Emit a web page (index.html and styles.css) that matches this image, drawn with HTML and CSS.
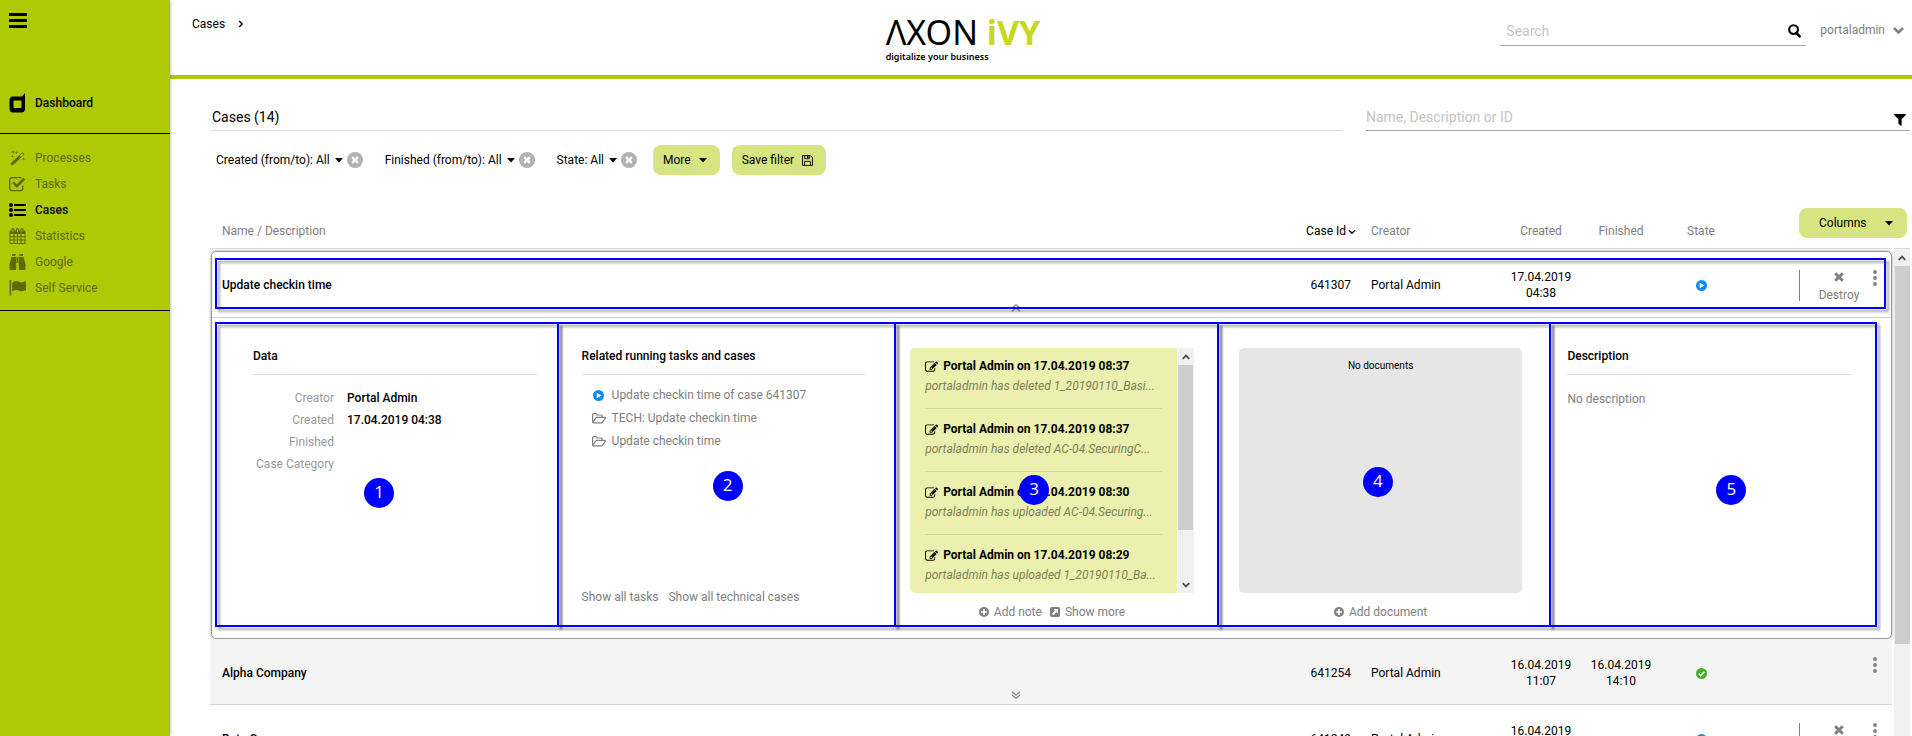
FILE: index.html
```html
<!DOCTYPE html>
<html lang="en">
<head>
<meta charset="utf-8">
<title>Cases - Portal</title>
<link rel="stylesheet" href="styles.css">
</head>
<body>
<svg class="sprite" aria-hidden="true">
  <symbol id="i-bars" viewBox="0 0 18 15"><path d="M0 0h18v3H0zM0 6h18v3H0zM0 12h18v3H0z"/></symbol>
  <symbol id="i-dash" viewBox="0 0 16 20"><path fill-rule="evenodd" d="M3.500 3.500H12.500L15.500 0V15.500Q15.500 19.500 12 19.500H3.500Q0 19.500 0 15.500V7.500Q0 3.500 3.500 3.500ZM4 7.500V15H12V7.500Z"/></symbol>
  <symbol id="i-magic" viewBox="0 0 16 16"><path fill-rule="evenodd" d="M1 13.600 13 2.200 15 4.300 3 15.700ZM10.300 5.700 11.600 7 14 4.400 12.800 3.300Z"/><path d="M3.500 0 4 1.500 5.500 2 4 2.500 3.500 4 3 2.500 1.500 2 3 1.500ZM7 1.200 7.500 2.200 8.500 2.700 7.500 3.200 7 4.200 6.500 3.200 5.500 2.700 6.500 2.200ZM14 7.500 14.400 8.500 15.500 9 14.400 9.500 14 10.500 13.600 9.500 12.500 9 13.600 8.500ZM3 5 3.400 6 4.500 6.500 3.400 7 3 8 2.600 7 1.500 6.500 2.600 6Z"/></symbol>
  <symbol id="i-check" viewBox="0 0 16 14"><path d="M13 8.500V11a2.200 2.200 0 0 1-2.200 2.200H3A2.200 2.200 0 0 1 .7 11V3.200A2.200 2.200 0 0 1 3 1h8.500" fill="none" stroke="currentColor" stroke-width="1.300"/><path d="M3 6.300 4.600 4.700 7.300 7.300 13.400 1.200 15.200 3 7.300 10.800Z"/></symbol>
  <symbol id="i-list" viewBox="0 0 17 14"><circle cx="2" cy="2" r="2"/><circle cx="2" cy="7" r="2"/><circle cx="2" cy="12" r="2"/><path d="M5 1h12v2H5zM5 6h12v2H5zM5 11h12v2H5z"/></symbol>
  <symbol id="i-cal" viewBox="0 0 16 16"><path fill-rule="evenodd" d="M0 3.500Q0 2.500 1 2.500H2V1.500Q2 0 3.500 0T5 1.500V2.500H6.500V1.500Q6.500 0 8 0T9.500 1.500V2.500H11V1.500Q11 0 12.500 0T14 1.500V2.500H15Q16 2.500 16 3.500V15Q16 16 15 16H1Q0 16 0 15ZM1 6V8.300H4V6ZM5 6V8.300H7.600V6ZM8.500 6V8.300H11V6ZM12 6V8.300H15V6ZM1 9.200V11.600H4V9.200ZM5 9.200V11.600H7.600V9.200ZM8.500 9.200V11.600H11V9.200ZM12 9.200V11.600H15V9.200ZM1 12.500V15H4V12.500ZM5 12.500V15H7.600V12.500ZM8.500 12.500V15H11V12.500ZM12 12.500V15H15V12.500ZM3 1.500V4H4V1.500ZM7.500 1.500V4H8.500V1.500ZM12 1.500V4H13V1.500Z"/></symbol>
  <symbol id="i-bino" viewBox="0 0 16 16"><path d="M2.500 0H6V2H2.500ZM10 0H13.500V2H10ZM2 3H6.700V15Q6.700 16 5.700 16H1Q0 16 0 15V10ZM14 3H9.300V15Q9.300 16 10.300 16H15Q16 16 16 15V10ZM7.200 3H8.800V9H7.200Z"/></symbol>
  <symbol id="i-flag" viewBox="0 0 16 14"><path d="M.6 1a.9.900 0 1 1 1.400 0V14H.6ZM3 2Q6-.5 9.500 1.200 12 2.500 16 .5V8.800Q12.500 11 9.500 9.500 6.500 8 3 10.300Z"/></symbol>
  <symbol id="i-search" viewBox="0 0 14 15"><circle cx="6" cy="6" r="4.700" fill="none" stroke="currentColor" stroke-width="2.300"/><path d="M9 9.500 12.500 13.300" stroke="currentColor" stroke-width="2.800" stroke-linecap="round"/></symbol>
  <symbol id="i-chev" viewBox="0 0 11 8"><path d="M1 1.500 5.500 6 10 1.500" fill="none" stroke="currentColor" stroke-width="2.600"/></symbol>
  <symbol id="i-thin" viewBox="0 0 8 6"><path d="M1 1.200 4 4.200 7 1.200" fill="none" stroke="currentColor" stroke-width="1.400"/></symbol>
  <symbol id="i-caret" viewBox="0 0 8 5"><path d="M0 0H8L4 4.500Z"/></symbol>
  <symbol id="i-filter" viewBox="190 256 1412 1408"><path d="M1595 295q17 41-14 70l-493 493v742q0 42-39 59-13 5-25 5-27 0-45-19l-256-256q-19-19-19-45V858L211 365q-31-29-14-70 17-39 59-39h1280q42 0 59 39z"/></symbol>
  <symbol id="i-timesc" viewBox="0 0 16 16"><circle cx="8" cy="8" r="8"/><path d="M5.200 5.200 10.800 10.800M10.800 5.200 5.200 10.800" stroke="#fff" stroke-width="2.600"/></symbol>
  <symbol id="i-save" viewBox="0 0 12 12"><path d="M.6.6H9L11.400 3V11.400H.6ZM2.800 11.400V7H9.200V11.400M3 .6V4H8V.6" fill="none" stroke="currentColor" stroke-width="1"/><path d="M5.500 1H7V3.500H5.500Z"/></symbol>
  <symbol id="i-play" viewBox="0 0 12 12"><circle cx="6" cy="6" r="6"/><path d="M4 3 9.200 6 4 9Z" fill="#fff"/></symbol>
  <symbol id="i-done" viewBox="0 0 12 12"><circle cx="6" cy="6" r="6"/><path d="M3 6 5.200 8.200 9 4.200" fill="none" stroke="#fff" stroke-width="1.800"/></symbol>
  <symbol id="i-times" viewBox="0 0 10 10"><path d="M1.200 1.200 8.800 8.800M8.800 1.200 1.200 8.800" stroke="currentColor" stroke-width="3"/></symbol>
  <symbol id="i-dots" viewBox="0 0 4 16"><circle cx="2" cy="2" r="1.900"/><circle cx="2" cy="8" r="1.900"/><circle cx="2" cy="14" r="1.900"/></symbol>
  <symbol id="i-folder" viewBox="0 0 14 11"><path d="M.6 9.800V1.600Q.6.600 1.500.6H4Q4.900.6 5 2H9.300Q10.200 2 10.200 3V4.200M.6 9.900 3.600 5Q4 4.300 4.800 4.300H12.800Q13.700 4.400 13.200 5.200L10.800 8.900Q10.200 9.900 9.200 9.900H1" fill="none" stroke="currentColor" stroke-width="1.200"/></symbol>
  <symbol id="i-edit" viewBox="0 120 1784 1420"><path d="M888 1184l116-116-152-152-116 116v56h96v96h56zm440-720q-16-16-33 1L945 815q-17 17-1 33t33-1l350-350q17-17 1-33zm80 594v190q0 119-84.500 203.500T1120 1536H288q-119 0-203.500-84.500T0 1248V416q0-119 84.500-203.500T288 128h832q63 0 117 25 15 7 18 23 3 17-9 29l-49 49q-14 14-32 8-23-6-45-6H288q-66 0-113 47t-47 113v832q0 66 47 113t113 47h832q66 0 113-47t47-113v-126q0-13 9-22l64-64q15-15 35-7t20 29zm-96-738l288 288-672 672H640V992zm444 132l-92 92-288-288 92-92q28-28 68-28t68 28l152 152q28 28 28 68t-28 68z"/></symbol>
  <symbol id="i-plus" viewBox="0 0 11 11"><circle cx="5.500" cy="5.500" r="5.500"/><path d="M5.500 2.300V8.700M2.300 5.500H8.700" stroke="#fff" stroke-width="1.800"/></symbol>
  <symbol id="i-ext" viewBox="0 0 11 11"><rect width="11" height="11" rx="2"/><path d="M4 2.200H8.800V7L7.200 5.400 3.600 9 2 7.400 5.600 3.800Z" fill="#fff"/></symbol>
  <symbol id="i-dbl" viewBox="0 0 10 8"><path d="M1 .7 5 4 9 .7M1 4 5 7.300 9 4" fill="none" stroke="currentColor" stroke-width="1.200"/></symbol>
</svg>

<div class="app">
  <nav class="sidebar" aria-label="Main menu">
    <button class="menu-toggle" type="button" aria-label="Toggle menu"><svg class="icon w18"><use href="#i-bars"/></svg></button>
    <a class="nav-link home" href="#"><svg class="icon nav-icon tall"><use href="#i-dash"/></svg>Dashboard</a>
    <div class="nav-group">
      <a class="nav-link" href="#"><svg class="icon nav-icon"><use href="#i-magic"/></svg>Processes</a>
      <a class="nav-link" href="#"><svg class="icon nav-icon"><use href="#i-check"/></svg>Tasks</a>
      <a class="nav-link active" href="#"><svg class="icon nav-icon"><use href="#i-list"/></svg>Cases</a>
      <a class="nav-link" href="#"><svg class="icon nav-icon"><use href="#i-cal"/></svg>Statistics</a>
      <a class="nav-link" href="#"><svg class="icon nav-icon"><use href="#i-bino"/></svg>Google</a>
      <a class="nav-link" href="#"><svg class="icon nav-icon"><use href="#i-flag"/></svg>Self Service</a>
    </div>
  </nav>

  <div class="page">
    <header class="topbar">
      <div class="crumbs"><a href="#">Cases</a><svg class="icon crumb-sep"><use href="#i-thin"/></svg></div>
      <div class="logo">
        <div class="logo-name">ΛXON <b>iVY</b></div>
        <div class="logo-claim">digitalize your business</div>
      </div>
      <div class="tools">
        <div class="search">
          <input type="text" placeholder="Search" aria-label="Search">
          <svg class="icon search-icon"><use href="#i-search"/></svg>
        </div>
        <button class="user" type="button">portaladmin<svg class="icon w11"><use href="#i-chev"/></svg></button>
      </div>
    </header>

    <main class="content">
      <div class="title-row">
        <h1>Cases (14)</h1>
        <div class="filter-box">
          <input type="text" placeholder="Name, Description or ID" aria-label="Name, Description or ID">
          <svg class="icon w12"><use href="#i-filter"/></svg>
        </div>
      </div>

      <div class="filters">
        <div class="filter"><button type="button">Created (from/to): All<svg class="icon caret"><use href="#i-caret"/></svg></button><button type="button" class="clear" aria-label="Remove created filter"><svg class="icon w16"><use href="#i-timesc"/></svg></button></div>
        <div class="filter"><button type="button">Finished (from/to): All<svg class="icon caret"><use href="#i-caret"/></svg></button><button type="button" class="clear" aria-label="Remove finished filter"><svg class="icon w16"><use href="#i-timesc"/></svg></button></div>
        <div class="filter"><button type="button">State: All<svg class="icon caret"><use href="#i-caret"/></svg></button><button type="button" class="clear" aria-label="Remove state filter"><svg class="icon w16"><use href="#i-timesc"/></svg></button></div>
        <div class="filter-actions">
          <button type="button" class="btn">More<svg class="icon caret"><use href="#i-caret"/></svg></button>
          <button type="button" class="btn">Save filter<svg class="icon w11"><use href="#i-save"/></svg></button>
        </div>
      </div>

      <div class="list">
        <button type="button" class="btn columns">Columns<svg class="icon caret"><use href="#i-caret"/></svg></button>
        <table class="cases">
          <colgroup><col><col class="c-id"><col class="c-creator"><col class="c-date"><col class="c-date"><col class="c-date"><col class="c-actions"></colgroup>
          <thead>
            <tr><th class="name">Name / Description</th><th class="id sorted">Case Id<svg class="icon w8"><use href="#i-thin"/></svg></th><th class="creator">Creator</th><th>Created</th><th>Finished</th><th>State</th><th></th></tr>
          </thead>
          <tbody class="expanded">
            <tr class="case">
              <td class="name">Update checkin time<button type="button" class="toggle up" aria-label="Collapse"><svg class="icon w10"><use href="#i-dbl"/></svg></button><span class="frame frame-row"></span></td>
              <td class="id">641307</td><td class="creator">Portal Admin</td><td>17.04.2019 04:38</td><td></td>
              <td><svg class="icon w11 blue"><use href="#i-play"/></svg></td>
              <td class="actions"><div><button type="button" class="destroy"><svg class="icon w10"><use href="#i-times"/></svg>Destroy</button><button type="button" class="more" aria-label="More actions"><svg class="icon dots"><use href="#i-dots"/></svg></button></div></td>
            </tr>
            <tr>
              <td colspan="7" class="detail">
                <div class="panels">
                  <section class="panel p1">
                    <h2>Data</h2>
                    <dl>
                      <dt>Creator</dt><dd>Portal Admin</dd>
                      <dt>Created</dt><dd>17.04.2019 04:38</dd>
                      <dt>Finished</dt><dd></dd>
                      <dt>Case Category</dt><dd></dd>
                    </dl>
                    <span class="frame"></span><span class="badge">1</span>
                  </section>
                  <section class="panel p2">
                    <h2>Related running tasks and cases</h2>
                    <ul class="related">
                      <li><svg class="icon w11 blue"><use href="#i-play"/></svg><a href="#">Update checkin time of case 641307</a></li>
                      <li><svg class="icon w14"><use href="#i-folder"/></svg><a href="#">TECH: Update checkin time</a></li>
                      <li><svg class="icon w14"><use href="#i-folder"/></svg><a href="#">Update checkin time</a></li>
                    </ul>
                    <div class="panel-foot start"><a href="#">Show all tasks</a><a href="#">Show all technical cases</a></div>
                    <span class="frame"></span><span class="badge">2</span>
                  </section>
                  <section class="panel p3">
                    <div class="notes-wrap">
                      <ul class="notes">
                        <li><strong><svg class="icon w13"><use href="#i-edit"/></svg>Portal Admin on 17.04.2019 08:37</strong><em>portaladmin has deleted 1_20190110_Basi...</em></li>
                        <li><strong><svg class="icon w13"><use href="#i-edit"/></svg>Portal Admin on 17.04.2019 08:37</strong><em>portaladmin has deleted AC-04.SecuringC...</em></li>
                        <li><strong><svg class="icon w13"><use href="#i-edit"/></svg>Portal Admin on 17.04.2019 08:30</strong><em>portaladmin has uploaded AC-04.Securing...</em></li>
                        <li><strong><svg class="icon w13"><use href="#i-edit"/></svg>Portal Admin on 17.04.2019 08:29</strong><em>portaladmin has uploaded 1_20190110_Ba...</em></li>
                      </ul>
                      <div class="scroll notes-scroll"><svg class="icon arrow flip"><use href="#i-chev"/></svg><span class="thumb"></span><svg class="icon arrow"><use href="#i-chev"/></svg></div>
                    </div>
                    <div class="panel-foot"><a href="#"><svg class="icon w10"><use href="#i-plus"/></svg>Add note</a><a href="#"><svg class="icon w10"><use href="#i-ext"/></svg>Show more</a></div>
                    <span class="frame"></span><span class="badge">3</span>
                  </section>
                  <section class="panel p4">
                    <div class="docs">No documents</div>
                    <div class="panel-foot"><a href="#"><svg class="icon w10"><use href="#i-plus"/></svg>Add document</a></div>
                    <span class="frame"></span><span class="badge">4</span>
                  </section>
                  <section class="panel p5">
                    <h2>Description</h2>
                    <p>No description</p>
                    <span class="frame"></span><span class="badge">5</span>
                  </section>
                </div>
              </td>
            </tr>
          </tbody>
          <tbody>
            <tr class="case odd">
              <td class="name">Alpha Company<button type="button" class="toggle" aria-label="Expand"><svg class="icon w10"><use href="#i-dbl"/></svg></button></td>
              <td class="id">641254</td><td class="creator">Portal Admin</td><td>16.04.2019 11:07</td><td>16.04.2019 14:10</td>
              <td><svg class="icon w11 green"><use href="#i-done"/></svg></td>
              <td class="actions"><div><button type="button" class="more" aria-label="More actions"><svg class="icon dots"><use href="#i-dots"/></svg></button></div></td>
            </tr>
            <tr class="case">
              <td class="name">Beta Company<button type="button" class="toggle" aria-label="Expand"><svg class="icon w10"><use href="#i-dbl"/></svg></button></td>
              <td class="id">641249</td><td class="creator">Portal Admin</td><td>16.04.2019 10:52</td><td></td>
              <td><svg class="icon w11 blue"><use href="#i-play"/></svg></td>
              <td class="actions"><div><button type="button" class="destroy"><svg class="icon w10"><use href="#i-times"/></svg>Destroy</button><button type="button" class="more" aria-label="More actions"><svg class="icon dots"><use href="#i-dots"/></svg></button></div></td>
            </tr>
          </tbody>
        </table>
        <div class="scroll list-scroll"><svg class="icon arrow flip"><use href="#i-chev"/></svg><span class="thumb"></span></div>
      </div>
    </main>
  </div>
</div>
</body>
</html>
```

FILE: styles.css
```css
* { box-sizing: border-box; }
body {
  margin: 0;
  font: 12px/16px Roboto, "Liberation Sans", sans-serif;
  color: #000;
  background: #fff;
}
a { color: inherit; text-decoration: none; }
button { font: inherit; color: inherit; background: none; border: 0; padding: 0; display: inline-flex; align-items: center; }
h1, h2, p, ul, dl, dd { margin: 0; padding: 0; }
ul { list-style: none; }
input { font: 14px/20px Roboto, "Liberation Sans", sans-serif; border: 0; padding: 0; outline: 0; background: none; flex: 1; min-width: 0; }
input::placeholder { color: #c4c4c4; opacity: 1; }
.sprite { position: absolute; width: 0; height: 0; }
.icon { fill: currentColor; flex: none; width: 12px; height: 12px; }
.w8 { width: 8px; height: 6px; }
.w10 { width: 10px; height: 10px; }
.w11 { width: 11px; height: 11px; }
.w13 { width: 13px; height: 11px; }
.w14 { width: 14px; height: 11px; }
.w16 { width: 16px; height: 16px; }
.w18 { width: 18px; height: 15px; }
.caret { width: 8px; height: 5px; }
.blue { color: #0d8bfd; }
.green { color: #43b02a; }

.app { display: flex; height: 100vh; overflow: hidden; }
.page { flex: 1; min-width: 0; display: flex; flex-direction: column; }

.sidebar { width: 170px; flex: none; background: #afca05; box-shadow: 0 0 3px rgba(0, 0, 0, .4); z-index: 1; }
.menu-toggle { display: flex; margin: 13px 0 0 9px; }
.nav-link { display: flex; align-items: center; gap: 9px; height: 26px; padding-left: 9px; color: #5b6a05; }
.nav-link.home, .nav-link.active { color: #000; font-weight: 500; }
.nav-link.home { height: 61px; margin-top: 45px; border-bottom: 1px solid #000; }
.nav-icon { width: 17px; height: 16px; }
.nav-icon.tall { height: 20px; }
.nav-group { padding: 11px 0 9px; border-bottom: 1px solid #000; }

.topbar { height: 79px; flex: none; display: grid; grid-template-columns: 1fr auto 1fr; border-bottom: 4px solid #afca05; }
.crumbs { display: flex; align-items: center; gap: 12px; height: 16px; margin: 16px 0 0 22px; }
.crumb-sep { width: 8px; height: 6px; transform: rotate(-90deg); }
.logo { padding-top: 13px; margin-right: 156px; }
.logo-name { font: 34px/39px "Noto Sans", sans-serif; }
.logo-name b { color: #c8d820; font-weight: 700; }
.logo-claim { font: 600 9px/10px "Noto Sans", sans-serif; }
.tools { display: flex; justify-content: flex-end; align-items: flex-start; padding: 16px 8px 0 0; gap: 14px; }
.search { display: flex; align-items: center; width: 306px; height: 30px; padding: 0 5px 0 6px; border-bottom: 1px solid #a5a5a5; }
.search-icon { width: 13px; height: 14px; }
.user { height: 28px; gap: 8px; color: #808080; }

.content { padding: 29px 2px 0 40px; flex: 1; min-height: 0; display: flex; flex-direction: column; }
.title-row { display: flex; gap: 25px; }
h1 { flex: 1133; height: 23px; padding-left: 2px; font-weight: 400; font-size: 14px; line-height: 18px; border-bottom: 1px solid #ddd; }
.filter-box { flex: 542; display: flex; align-items: flex-start; height: 23px; padding-right: 4px; border-bottom: 1px solid #a5a5a5; }
.filter-box input { height: 18px; }
.filter-box .icon { margin-top: 6px; height: 12px; }
.filters { display: flex; align-items: center; gap: 22px; height: 30px; margin-top: 14px; padding-left: 6px; }
.filter { display: flex; align-items: center; gap: 4px; }
.filter button { gap: 5px; }
.filter .clear { color: #b2b2b2; }
.filter-actions { display: flex; gap: 12px; margin-left: -6px; }
.btn { height: 30px; padding: 0 13px 0 10px; gap: 8px; border-radius: 8px; background: #d7e482; }

.list { position: relative; display: flex; align-items: flex-start; gap: 2px; margin-top: 33px; flex: 1; min-height: 0; }
.columns { position: absolute; right: 3px; top: 0; width: 108px; padding: 0 14px 0 20px; justify-content: space-between; }
.cases { flex: 1; table-layout: fixed; width: 100%; border-spacing: 0; }
.c-id { width: 65px; }
.c-creator { width: 140px; }
.c-date { width: 80px; }
.c-actions { width: 151px; }
th, td { padding: 0; text-align: center; }
th { height: 41px; padding: 5px 0 0; font-weight: 400; color: #808080; border-bottom: 1px solid #ddd; }
.name, .creator { text-align: left; }
.name { padding-left: 12px; }
.creator { padding-left: 10px; }
.id { text-align: right; padding-right: 10px; }
th.sorted { color: #000; padding-right: 5px; white-space: nowrap; }
.sorted .icon { margin-left: 2px; }
td.name { font-weight: 500; }
.case { position: relative; }
.case td { height: 66px; padding-top: 2px; padding-bottom: 0; border-bottom: 1px solid #d2d2d2; }
.case td:nth-child(4), .case td:nth-child(5) { padding-left: 8px; padding-right: 8px; }
.case td > .icon { vertical-align: middle; }
.odd td { background: #f4f4f4; }
.toggle { position: absolute; left: 48%; bottom: 5px; color: #808080; margin-left: -6px; }
.toggle.up { bottom: 5px; transform: rotate(180deg); }
.actions > div { display: flex; justify-content: flex-end; height: 31px; padding-right: 15px; color: #808080; }
.destroy { flex-direction: column; gap: 5px; width: 74px; height: 31px; padding: 2px 0 0 5px; border-left: 1px solid #808080; }
.more { align-self: flex-start; }
.dots { width: 4px; height: 16px; }

.expanded { position: relative; }
.expanded::after { content: ""; position: absolute; inset: 2px 0 0 1px; border: 1px solid #999; border-radius: 5px; box-shadow: 0 0 3px rgba(0, 0, 0, .4); pointer-events: none; }
.expanded .case td { height: 69px; padding-top: 4px; }
.detail { text-align: left; padding: 30px 41px 19px 43px; }
.panels { display: grid; grid-template-columns: repeat(5, 1fr); gap: 45px; }
.panel { position: relative; height: 272px; display: flex; flex-direction: column; color: #808080; min-width: 0; }
h2 { font-size: 12px; line-height: 16px; font-weight: 500; color: #000; padding-bottom: 10px; border-bottom: 1px solid #ddd; }
dl { display: grid; grid-template-columns: 81px 1fr; column-gap: 13px; margin-top: 12px; line-height: 22px; }
dt { text-align: right; color: #999; white-space: nowrap; }
dd { color: #000; font-weight: 500; }
.related { margin-top: 9px; line-height: 23px; }
.related li { display: grid; grid-template-columns: 14px 1fr; gap: 6px; padding-left: 10px; align-items: center; justify-items: center; }
.related a { justify-self: start; }
.panel-foot { display: flex; justify-content: center; gap: 8px; margin-top: auto; }
.panel-foot a { display: flex; align-items: center; gap: 5px; }
.panel-foot.start { justify-content: flex-start; gap: 10px; padding-bottom: 15px; }
.p5 p { margin-top: 16px; }
.notes-wrap { display: flex; height: 245px; gap: 1px; }
.notes { flex: 1; min-width: 0; padding: 0 15px; overflow: hidden; background: #ebf0ae; border-radius: 5px 0 0 5px; color: #000; line-height: 20px; }
.notes li { padding: 10px 0 12px; border-bottom: 1px solid #d2d79b; }
.notes li:first-child { padding-top: 8px; }
.notes strong { display: flex; align-items: center; gap: 5px; font-weight: 700; white-space: nowrap; }
.notes em { display: block; color: #7c7f5c; white-space: nowrap; overflow: hidden; text-overflow: ellipsis; }
.docs { height: 245px; padding-top: 10px; text-align: center; font-size: 10px; line-height: 16px; color: #000; background: #e6e6e6; border-radius: 5px; }

.scroll { display: flex; flex-direction: column; align-items: center; background: #f0f0f0; color: #505050; }
.arrow { width: 8px; height: 6px; margin: 6px 0 5px; }
.flip { transform: rotate(180deg); }
.thumb { width: 15px; background: #cdcdcd; }
.notes-scroll { width: 16px; }
.notes-scroll .thumb { height: 165px; margin-bottom: auto; }
.list-scroll { width: 16px; margin-top: 40px; height: 100%; border-top: 1px solid #ddd; flex: none; }
.list-scroll .thumb { height: 378px; }

/* Numbered call-outs over the case details */
.frame { position: absolute; border: 2px solid #00f; filter: drop-shadow(3px 3px 1px rgba(0, 0, 0, .35)); pointer-events: none; }
.frame-row { inset: 9px 6px 9px 5px; }
.p1 .frame { inset: -26px -22px -7px -38px; }
.p2 .frame { inset: -26px -31px -7px -25px; }
.p3 .frame { inset: -26px -25px -7px -16px; }
.p4 .frame { inset: -26px -29px -7px -22px; }
.p5 .frame { inset: -26px -26px -7px -18px; }
.badge { position: absolute; width: 30px; height: 30px; border-radius: 50%; background: #00f; color: #fff; font: 17px/28px "Open Sans", sans-serif; text-align: center; }
.p1 .badge { left: 111px; top: 130px; }
.p2 .badge { left: 131px; top: 123px; }
.p3 .badge { left: 109px; top: 127px; }
.p4 .badge { left: 124px; top: 119px; }
.p5 .badge { left: 149px; top: 127px; }
```
